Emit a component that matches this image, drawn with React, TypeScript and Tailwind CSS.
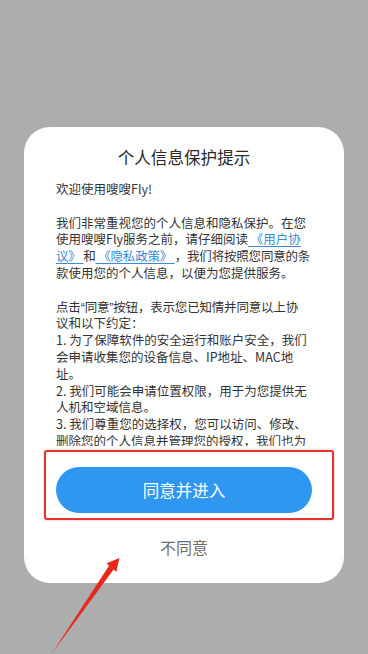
import type { ReactNode } from 'react';

const FONT = { fontFamily: '"Noto Sans CJK SC", "Noto Sans", sans-serif' };

const Link = ({ children }: { children: ReactNode }) => (
    <span className="text-[#3a8ad6] underline underline-offset-[2px] decoration-[1px]">{children}</span>
);

// straight-looking narrow quotes as in the reference
const Q = ({ c }: { c: string }) => (
    <span style={{ fontFamily: '"Liberation Sans", sans-serif' }}>{c}</span>
);

const lines: ReactNode[] = [
    '欢迎使用嗖嗖Fly!',
    '',
    '我们非常重视您的个人信息和隐私保护。在您',
    <>使用嗖嗖Fly服务之前，请仔细阅读<Link>{'\u00a0《用户协'}</Link></>,
    <span className="tracking-[-0.015em]"><Link>{'议》\u00a0'}</Link>和<Link>{'\u00a0《隐私政策》\u00a0'}</Link>，我们将按照您同意的条</span>,
    '款使用您的个人信息，以便为您提供服务。',
    '',
    <span className="tracking-[-0.015em]">点击<Q c="“" />同意<Q c="”" />按钮，表示您已知情并同意以上协</span>,
    '议和以下约定：',
    '1. 为了保障软件的安全运行和账户安全，我们',
    '会申请收集您的设备信息、IP地址、MAC地',
    '址。',
    '2. 我们可能会申请位置权限，用于为您提供无',
    '人机和空域信息。',
    '3. 我们尊重您的选择权，您可以访问、修改、',
    '删除您的个人信息并管理您的授权，我们也为',
    '您提供了注销账户的渠道。',
];

export default function App() {
    return (
        <div className="relative w-[368px] h-[654px] bg-[#adadad] overflow-hidden flex flex-col items-center pt-[127px]" style={FONT}>
            <div className="w-[320px] bg-white rounded-[26px] flex flex-col px-[32px] pt-[18px] pb-[24px]">
                <h1 className="text-center text-[16.6px] leading-[24px] text-[#2a2a2a] font-normal">个人信息保护提示</h1>

                <div className="mt-[12px] mr-[-8px] h-[265px] overflow-hidden text-[12.5px] leading-[16.8px] text-[#333]">
                    {lines.map((line, i) => (
                        <div key={i} className="whitespace-nowrap h-[16.8px]">{line}</div>
                    ))}
                </div>

                <button className="mt-[21px] h-[46px] w-full rounded-full bg-[#2f97ef] text-white text-[16.5px]">
                    同意并进入
                </button>

                <div className="mt-[22px] text-center text-[16px] leading-[24px] text-[#6f6f6f]">不同意</div>
            </div>

            {/* annotation overlay */}
            <div className="absolute left-[44px] top-[450px] w-[290px] h-[70px] border-[2.5px] border-[#e3342b] rounded-[3px] shadow-[0_0_2px_rgba(227,52,43,0.5)]" />
            <svg className="absolute left-0 top-0" width="368" height="654" viewBox="0 0 368 654">
                <polygon
                    points="51.5,654 109,565.8 106.5,563.3 119.5,558 116.3,572 113.6,569.6"
                    fill="#e8281f"
                />
            </svg>
        </div>
    );
}
